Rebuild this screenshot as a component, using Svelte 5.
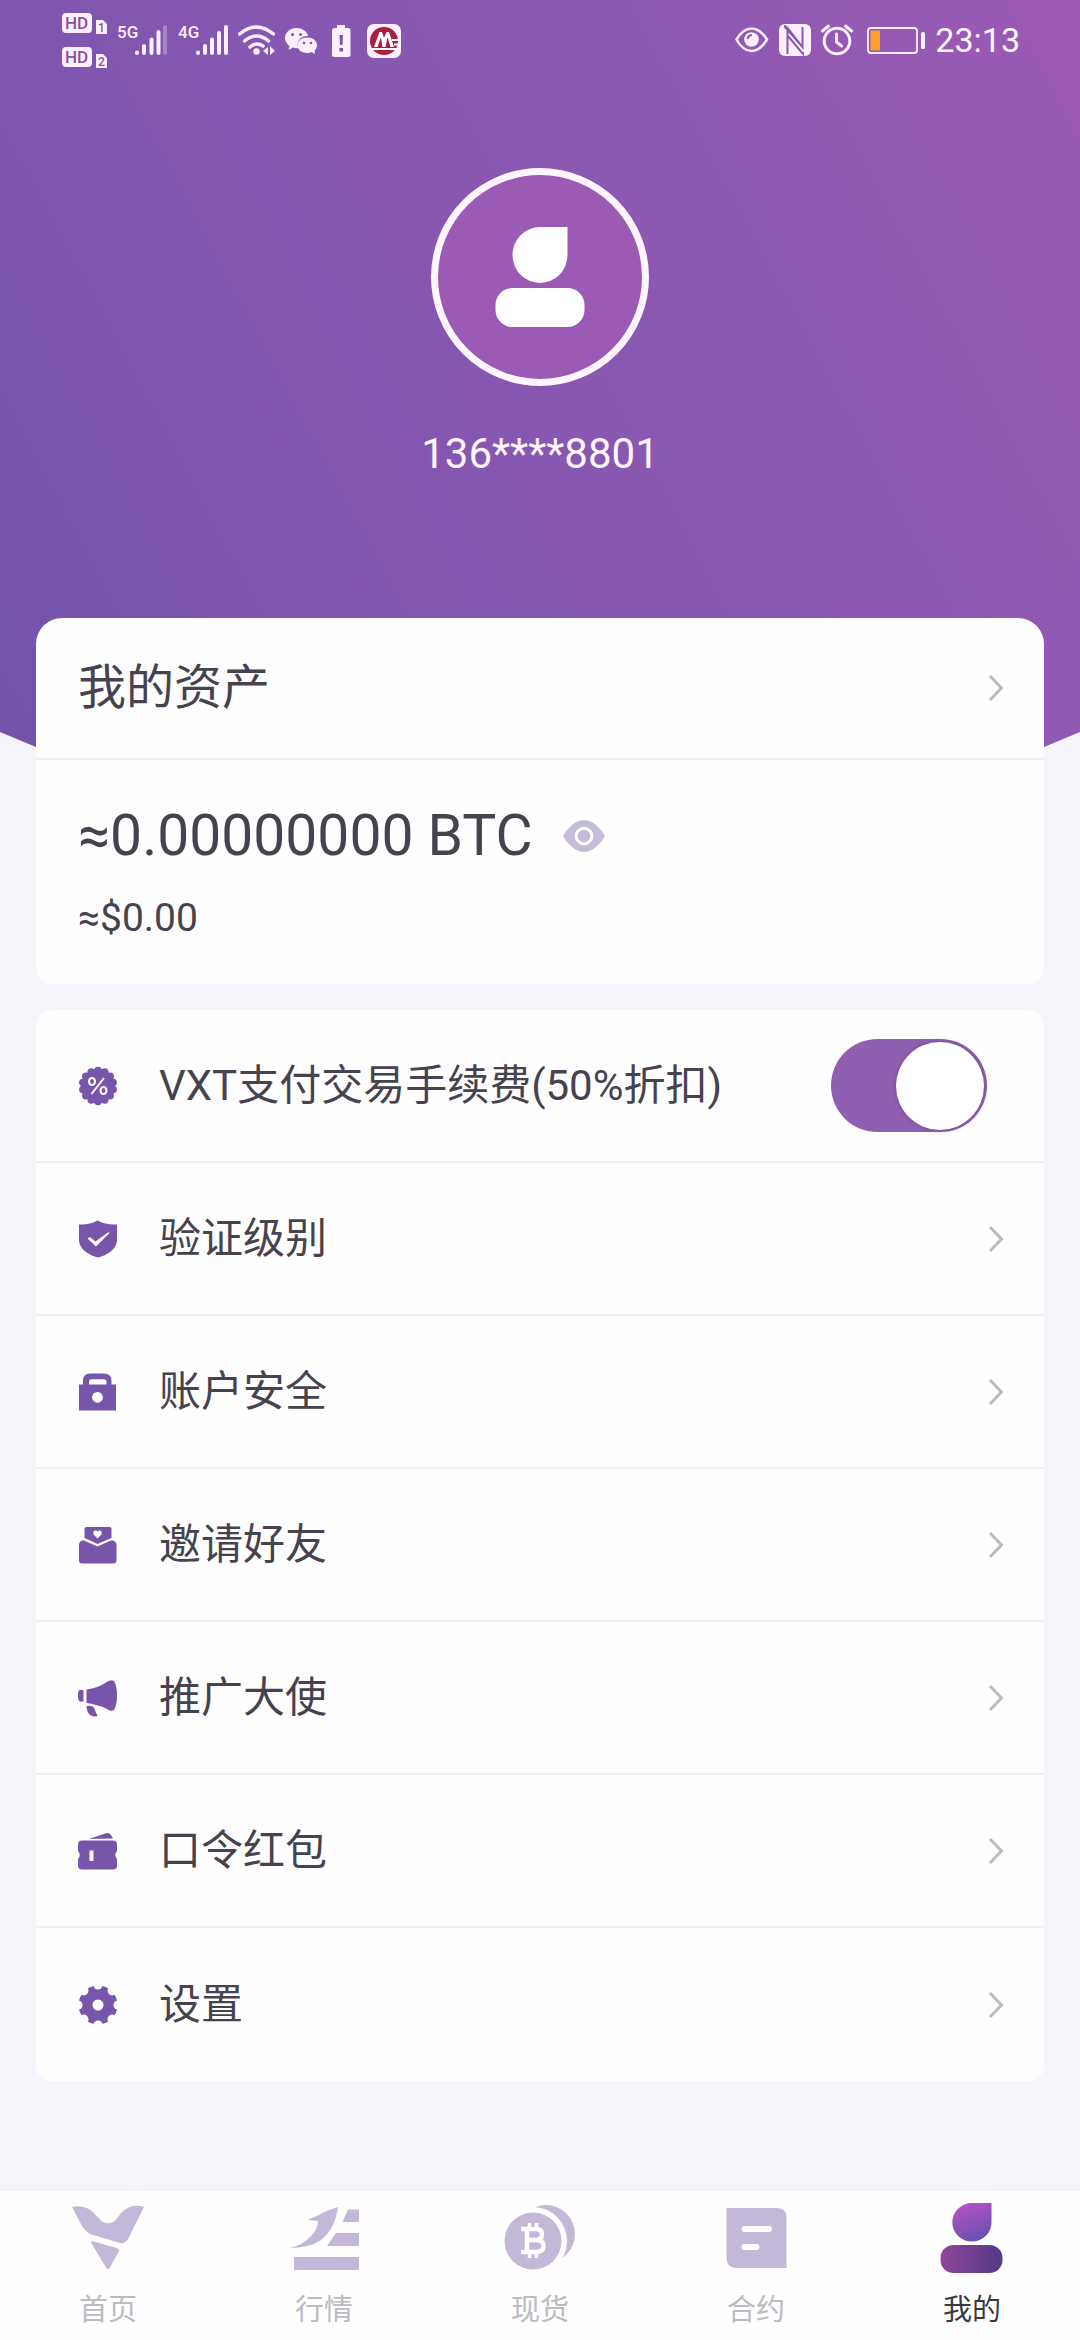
<script>
  let discount = $state(true);
  let hidden = $state(false);

  const rows = [
    { icon: 'shield', label: '验证级别' },
    { icon: 'lock', label: '账户安全' },
    { icon: 'invite', label: '邀请好友' },
    { icon: 'horn', label: '推广大使' },
    { icon: 'ticket', label: '口令红包' },
    { icon: 'gear', label: '设置' }
  ];

  const tabs = [
    { icon: 'home', label: '首页' },
    { icon: 'market', label: '行情' },
    { icon: 'spot', label: '现货' },
    { icon: 'contract', label: '合约' },
    { icon: 'mine', label: '我的', active: true }
  ];

  // Evenly spaced points on a circle, for the badge scallops and gear notches.
  const ring = (n, r, c) =>
    Array.from({ length: n }, (_, i) => {
      const a = (i * 2 * Math.PI) / n;
      return { x: c + r * Math.sin(a), y: c - r * Math.cos(a) };
    });
</script>

{#snippet chevron()}
  <svg class="chevron" viewBox="0 0 16 28" aria-hidden="true"><path d="M2 2 13.500 14 2 26" /></svg>
{/snippet}

{#snippet rowIcon(name)}
  <svg class="row-icon" viewBox="0 0 40 40" aria-hidden="true">
    {#if name === 'percent'}
      <circle cx="20" cy="20" r="17" />
      {#each ring(14, 15.500, 20) as p}<circle cx={p.x} cy={p.y} r="3.800" />{/each}
      <g fill="none" stroke="#fff" stroke-width="2">
        <ellipse cx="14" cy="15.500" rx="3" ry="3.600" /><ellipse cx="25.500" cy="24.500" rx="3" ry="3.600" />
        <path d="M26 12 13.500 28" />
      </g>
    {:else if name === 'shield'}
      <path d="M1 5.500Q12 6 19.500 1.500 27 6 39 5.500V22C38 31 29 36 20 38.500 11 36 2 31 1 22Z" />
      <path d="M9.500 19.500 12 18l5.500 4.500L30.500 13l1 1L18 27.500Z" fill="#fff" />
    {:else if name === 'lock'}
      <path fill-rule="evenodd" d="M1 12.500H5V9Q5 1.500 12 1.500H26Q33.500 1.500 33.500 9V12.500H38V38.500H1ZM11 12.500H28.500V10Q28.500 7.300 26 7.300H13.500Q11 7.300 11 10ZM19.500 20a5.400 5.400 0 1 0 .01 0Z" />
    {:else if name === 'invite'}
      <path d="M6.500 4Q6.500 2 8.500 2H31.500Q33.500 2 33.500 4V13L19.500 19 6.500 13Z" />
      <path fill="#fff" d="M19.500 13.500 15.500 9.500Q14.500 5.500 17.500 5.500 19 5.500 19.500 6.800 20 5.500 21.500 5.500 24.500 5.500 23.500 9.500Z" />
      <path d="M4 15.500H6L19.500 21.500 33 15.500H35Q38.500 16.500 38.500 20V35.500Q38.500 38.500 35.500 38.500H4Q1 38.500 1 35.500V20Q1 16.500 4 15.500Z" />
    {:else if name === 'horn'}
      <path d="M2 12H5.500V23.500H2Q0 23 0 17.500T2 12Z" />
      <path d="M8.500 11.500Q20 10 28 4.500 33 1 36 3 39 8 39 17.500T36 32Q33 34 28 30.500 21 27 8.500 25Z" />
      <path d="M8.500 28Q15 27 16.500 31L19.500 38Q15 39.500 11.500 36.500 8.500 33 8.500 28Z" />
    {:else if name === 'ticket'}
      <path d="M11 8 27 2.500Q31 1 33 4L35 7.500Z" />
      <path fill-rule="evenodd" d="M4 9.500H35Q39 9.500 39 13.500V20Q35.500 24 39 28V34.500Q39 38.500 35 38.500H4Q0 38.500 0 34.500V28Q3.500 24 0 20V13.500Q0 9.500 4 9.500ZM11.500 19.500V30H15.500V19.500Z" />
    {:else if name === 'gear'}
      <mask id="gear-cut">
        <rect width="40" height="40" fill="#fff" />
        {#each ring(8, 20, 20) as p}<circle cx={p.x} cy={p.y} r="4.600" fill="#000" />{/each}
        <circle cx="20" cy="20" r="5.500" fill="#000" />
      </mask>
      <circle cx="20" cy="20" r="19.500" mask="url(#gear-cut)" />
    {/if}
  </svg>
{/snippet}

{#snippet tabIcon(name)}
  <svg class="tab-icon" viewBox="0 0 80 72" aria-hidden="true">
    {#if name === 'home'}
      <path d="M4 5Q17 2 26 11 31 17 34 19.500 40 23 46 19.500 49 17 53 11 63 1 76 5L60 37Q57 42 52 41L22 32Q17 29 14 24Z" />
      <path d="M24 39 48.500 46Q52 47 50.500 50L42 65.500Q40 68.500 38 65.500L23 40.500Z" />
    {:else if name === 'market'}
      <path d="M54 5Q43 8 35 13L23.500 18 34 19Q34 27 27 34 19 43 6 46 25 46 37 38 51 27 54 5Z" />
      <path d="M64 7.500H75V20H58.500ZM52 31H75V44H43ZM10 55H75V68H10Z" />
    {:else if name === 'spot'}
      <circle cx="46" cy="32" r="29" />
      <circle cx="33" cy="39" r="34" fill="#fff" />
      <circle cx="33" cy="39" r="28.500" />
      <g fill="none" stroke="#fff" stroke-width="4.500">
        <path d="M21 27H36Q42 27 42 32.500T36 38H27M36 38Q43.500 38 43.500 44T36 50H21M27 27V50" />
        <path stroke-width="3.500" d="M29.500 21V27M36.500 21V27M29.500 50V56M36.500 50V56" />
      </g>
    {:else if name === 'contract'}
      <path d="M10.500 6H61Q70.500 6 70.500 16V66H21Q10.500 66 10.500 55Z" />
      <path d="M28.500 27H53M28.500 45H40.500" stroke="#fff" stroke-width="6" stroke-linecap="round" />
    {:else}
      <linearGradient id="head" x1="0.300" y1="0" x2="0.700" y2="1"><stop stop-color="#b654c4" /><stop offset="1" stop-color="#6350b0" /></linearGradient>
      <linearGradient id="body"><stop stop-color="#8f459a" /><stop offset="1" stop-color="#543b84" /></linearGradient>
      <path fill="url(#head)" d="M59.500 1V20A19.600 19.300 0 1 1 40 1Z" />
      <rect fill="url(#body)" x="8.500" y="43" width="62" height="28" rx="13" />
    {/if}
  </svg>
{/snippet}

<div class="page">
  <header class="hero">
    <div class="status">
      <div class="status-group">
        <svg width="45" height="56" viewBox="62 12 45 56" aria-hidden="true">
          <rect x="62" y="13" width="30" height="20" rx="4" /><rect x="62" y="47" width="30" height="20" rx="4" />
          <path d="M96 20h7l4 4v10H96ZM96 54h7l4 4v10H96Z" />
          <g class="cut"><text x="65" y="29" font-size="17">HD</text><text x="65" y="63" font-size="17">HD</text>
            <text x="98" y="32" font-size="12">1</text><text x="98" y="66" font-size="12">2</text></g>
        </svg>
        <svg width="51" height="56" viewBox="117 12 51 56" aria-hidden="true">
          <text x="117" y="38" font-size="17">5G</text>
          <path class="bars" d="M137 52.500V53M144 46V53M151.500 39.500V53M158.500 32V53" />
          <path class="bars" opacity=".3" d="M165 27V53" />
        </svg>
        <svg width="50" height="56" viewBox="178 12 50 56" aria-hidden="true">
          <text x="178" y="38" font-size="17">4G</text>
          <path class="bars" d="M198 52.500V53M205 46V53M212 39.500V53M219 33V53M226 27V53" />
        </svg>
        <svg width="37" height="56" viewBox="237 12 37 56" aria-hidden="true">
          <path class="line" stroke-width="3.500" d="M238.500 34Q255 20 272.500 34M243.500 41Q255.500 31 267.500 41M249 47Q255.500 41.500 262 46" />
          <circle cx="255.500" cy="51.500" r="3.200" /><path d="M267 47v8l-5-4ZM269 46v9l5-4Z" />
        </svg>
        <svg width="32" height="56" viewBox="283 12 32 56" aria-hidden="true">
          <path d="M294.500 28C288 28 283 32.500 283 38 283 41.500 285 44 287.500 46L286.500 50 291 47.500Q294 48.500 296 48C294 40 300 35.500 306 36 305 31 300 28 294.500 28Z" />
          <path d="M305.500 37.500C299.500 37.500 295.500 41 295.500 45.500S299.500 53 305.500 53Q308 53 309.500 52L313 54 312.500 51Q315 48.500 315 45.500C315 41 311 37.500 305.500 37.500Z" />
          <g class="dot"><circle cx="290.500" cy="34.500" r="1.500" /><circle cx="298.500" cy="34.500" r="1.500" /><circle cx="302" cy="43" r="1.300" /><circle cx="309" cy="43" r="1.300" /></g>
        </svg>
        <svg width="30" height="56" viewBox="327 12 30 56" aria-hidden="true">
          <path d="M337 25h8v3h3q2.500 0 2.500 2.500V54.500q0 2.500-2.500 2.500H334.500q-2.500 0-2.500-2.500V30.500Q332 28 334.500 28H337Z" />
          <path class="dot" d="M339.500 35h3.500l-.5 10h-2.500ZM339.500 48h3.500v3.500h-3.500Z" />
        </svg>
        <svg width="34" height="56" viewBox="366 12 34 56" aria-hidden="true">
          <rect x="366" y="24" width="34" height="34" rx="7" />
          <circle cx="383" cy="41" r="14" fill="#a92040" />
          <path fill="#fff" d="M373 47 378.500 32H381L383 38 385.500 32H388L393 47H389.500L386.500 37 384.500 47H381.500L380 37 376.500 47ZM370 48H396V50H370ZM391 39H398V41H391ZM393 43.500H398V45.500H393Z" />
        </svg>
      </div>
      <div class="status-group">
        <svg width="34" height="56" viewBox="735 12 34 56" aria-hidden="true">
          <path class="line" stroke-width="2.500" d="M736.500 39.500Q743 28.500 751.500 28.500T767 39.500Q760 51 751.500 51T736.500 39.500Z" />
          <circle cx="751.500" cy="39.500" r="7.300" /><path class="dotline" d="M747.500 39Q748 35.500 752 35" />
        </svg>
        <svg width="32" height="56" viewBox="779 12 32 56" aria-hidden="true">
          <rect x="779" y="24" width="32" height="32" rx="6" />
          <path class="dotline" d="M787.500 54V28L802.500 47V27M785 25V27L800 44M803 52V54L788 36" />
        </svg>
        <svg width="32" height="56" viewBox="821 12 32 56" aria-hidden="true">
          <circle class="line" stroke-width="3" cx="837" cy="41" r="12.800" />
          <path class="line" stroke-width="3" d="M836.500 34V42L841.500 46M822.500 31 828.500 26M851.500 31 845.500 26" />
        </svg>
        <svg width="62" height="56" viewBox="863 12 62 56" aria-hidden="true">
          <rect class="line" stroke-width="1.800" x="868" y="28" width="49" height="25" rx="3" />
          <rect x="870.500" y="30.500" width="9.500" height="20" rx="1" fill="#fb9f2c" /><rect x="921" y="32" width="4" height="17" rx="1.500" />
        </svg>
        <time>23:13</time>
      </div>
    </div>
    <div class="avatar">
      <svg viewBox="0 0 90 100" aria-hidden="true">
        <path d="M72.500 0V28A27.500 28 0 1 1 45 0Z" /><rect x="0.500" y="61" width="89" height="39" rx="17" />
      </svg>
    </div>
    <h1>136****8801</h1>
  </header>

  <main>
    <section class="card assets">
      <a class="assets-head" href="#assets"><h2>我的资产</h2>{@render chevron()}</a>
      <div class="balance">
        <p class="btc">
          <span>{hidden ? '******' : '≈0.00000000 BTC'}</span>
          <button type="button" aria-label="显示或隐藏资产" onclick={() => (hidden = !hidden)}>
            <svg viewBox="0 0 42 34" aria-hidden="true">
              <path d="M0 17Q3 11 9 6 15 1 21 1T33 6Q39 11 42 17 39 23 33 28 27 33 21 33T9 28Q3 23 0 17Z" />
              <circle cx="21" cy="17" r="7.800" fill="#c4bcd8" stroke="#fff" stroke-width="3" />
            </svg>
          </button>
        </p>
        <p class="usd">{hidden ? '****' : '≈$0.00'}</p>
      </div>
    </section>

    <section class="card menu">
      <label class="row toggle">
        {@render rowIcon('percent')}
        <span>VXT支付交易手续费(50%折扣)</span>
        <input type="checkbox" role="switch" bind:checked={discount} />
      </label>
      {#each rows as r}
        <a class="row" href={'#' + r.icon}>{@render rowIcon(r.icon)}<span>{r.label}</span>{@render chevron()}</a>
      {/each}
    </section>
  </main>

  <nav>
    {#each tabs as t}
      <a href={'#' + t.icon} class:active={t.active} aria-current={t.active ? 'page' : undefined}>
        {@render tabIcon(t.icon)}
        <span>{t.label}</span>
      </a>
    {/each}
  </nav>
</div>

<style>
  :global(body) {
    background: #f6f5fb;
  }
  .page {
    display: flex;
    flex-direction: column;
    min-height: 100vh;
    box-sizing: border-box;
    font-family: Roboto, 'Noto Sans CJK SC', sans-serif;
    color: #46434e;
  }
  svg {
    display: block;
    flex: none;
  }
  h1,
  h2,
  p {
    margin: 0;
    font-weight: 400;
  }
  a {
    color: inherit;
    text-decoration: none;
  }

  .hero {
    display: flex;
    flex-direction: column;
    align-items: center;
    box-sizing: border-box;
    min-height: 957px;
    color: #fff5ff;
    background: linear-gradient(62deg, #7453ad 10%, #8858b1 55%, #9b5ab5 100%);
    clip-path: polygon(0 0, 100% 0, 100% 732px, 50% 100%, 0 732px);
  }
  .status {
    display: flex;
    justify-content: space-between;
    align-self: stretch;
    padding: 12px 60px 12px 62px;
  }
  .status-group {
    display: flex;
    align-items: center;
    gap: 10px;
  }
  .status svg {
    fill: #fdeffd;
  }
  .status text {
    font-family: Roboto, sans-serif;
    font-weight: 500;
  }
  .cut text,
  .status .dot {
    fill: #7d55a6;
  }
  .bars {
    fill: none;
    stroke: #fdeffd;
    stroke-width: 4;
    stroke-linecap: round;
  }
  .line {
    fill: none;
    stroke: #fdeffd;
    stroke-linecap: round;
  }
  .dotline {
    fill: none;
    stroke: #8a58b0;
    stroke-width: 2;
  }
  time {
    font-size: 34px;
    line-height: 56px;
  }
  .avatar {
    display: grid;
    place-items: center;
    box-sizing: border-box;
    width: 218px;
    height: 218px;
    margin-top: 88px;
    border: 7px solid #fff5ff;
    border-radius: 50%;
    background: #9b5bb4;
  }
  .avatar svg {
    width: 90px;
    height: 100px;
    fill: #fff;
  }
  h1 {
    margin-top: 40px;
    font-size: 42px;
    line-height: 56px;
  }

  main {
    position: relative;
    display: flex;
    flex-direction: column;
    gap: 26px;
    margin-top: -339px;
    padding: 0 36px 40px;
  }
  .card {
    border-radius: 16px;
    background: #fefefe;
  }
  .assets {
    border-radius: 26px 26px 16px 16px;
  }
  .assets-head {
    display: flex;
    align-items: center;
    justify-content: space-between;
    height: 140px;
    padding: 0 40px 0 42px;
    border-bottom: 2px solid #f0f0f4;
  }
  h2 {
    font-size: 48px;
    line-height: 64px;
  }
  .chevron {
    width: 16px;
    height: 28px;
    margin-left: auto;
    fill: none;
    stroke: #bcbcbe;
    stroke-width: 3;
  }
  .balance {
    padding: 40px 42px;
  }
  .btc {
    display: flex;
    align-items: center;
    gap: 30px;
    font-size: 57px;
    line-height: 72px;
  }
  .btc button {
    padding: 0;
    border: 0;
    background: none;
    cursor: pointer;
  }
  .btc svg {
    width: 42px;
    height: 34px;
    fill: #c4bcd8;
  }
  .usd {
    margin-top: 20px;
    font-size: 39px;
    line-height: 52px;
  }

  .row {
    display: flex;
    align-items: center;
    gap: 41px;
    box-sizing: border-box;
    height: 153px;
    padding: 0 40px 0 42px;
    border-bottom: 2px solid #f0f0f5;
    font-size: 42px;
    line-height: 56px;
  }
  .row:last-child {
    border-bottom: 0;
  }
  .row-icon {
    width: 40px;
    height: 40px;
    fill: #7755aa;
  }
  .toggle {
    padding-right: 57px;
  }
  .toggle input {
    appearance: none;
    display: flex;
    align-items: center;
    box-sizing: border-box;
    width: 156px;
    height: 93px;
    margin: 0 0 0 auto;
    padding: 3px;
    border-radius: 47px;
    background: #b9b4c4;
    cursor: pointer;
  }
  .toggle input::before {
    content: '';
    width: 88px;
    height: 88px;
    border-radius: 50%;
    background: #fff;
    box-shadow: 0 0 4px #5e4a80;
  }
  .toggle input:checked {
    justify-content: flex-end;
    background: #915fb1;
  }

  nav {
    display: flex;
    margin-top: auto;
    padding: 12px 0 10px;
    border-top: 1px solid #eeebf4;
    background: #fefefe;
  }
  nav a {
    display: flex;
    flex: 1;
    flex-direction: column;
    align-items: center;
    gap: 16px;
    font-size: 29px;
    line-height: 40px;
    color: #bdbbc0;
  }
  nav .active {
    color: #3a3842;
  }
  .tab-icon {
    width: 80px;
    height: 72px;
    fill: #c3b8d8;
  }
</style>
